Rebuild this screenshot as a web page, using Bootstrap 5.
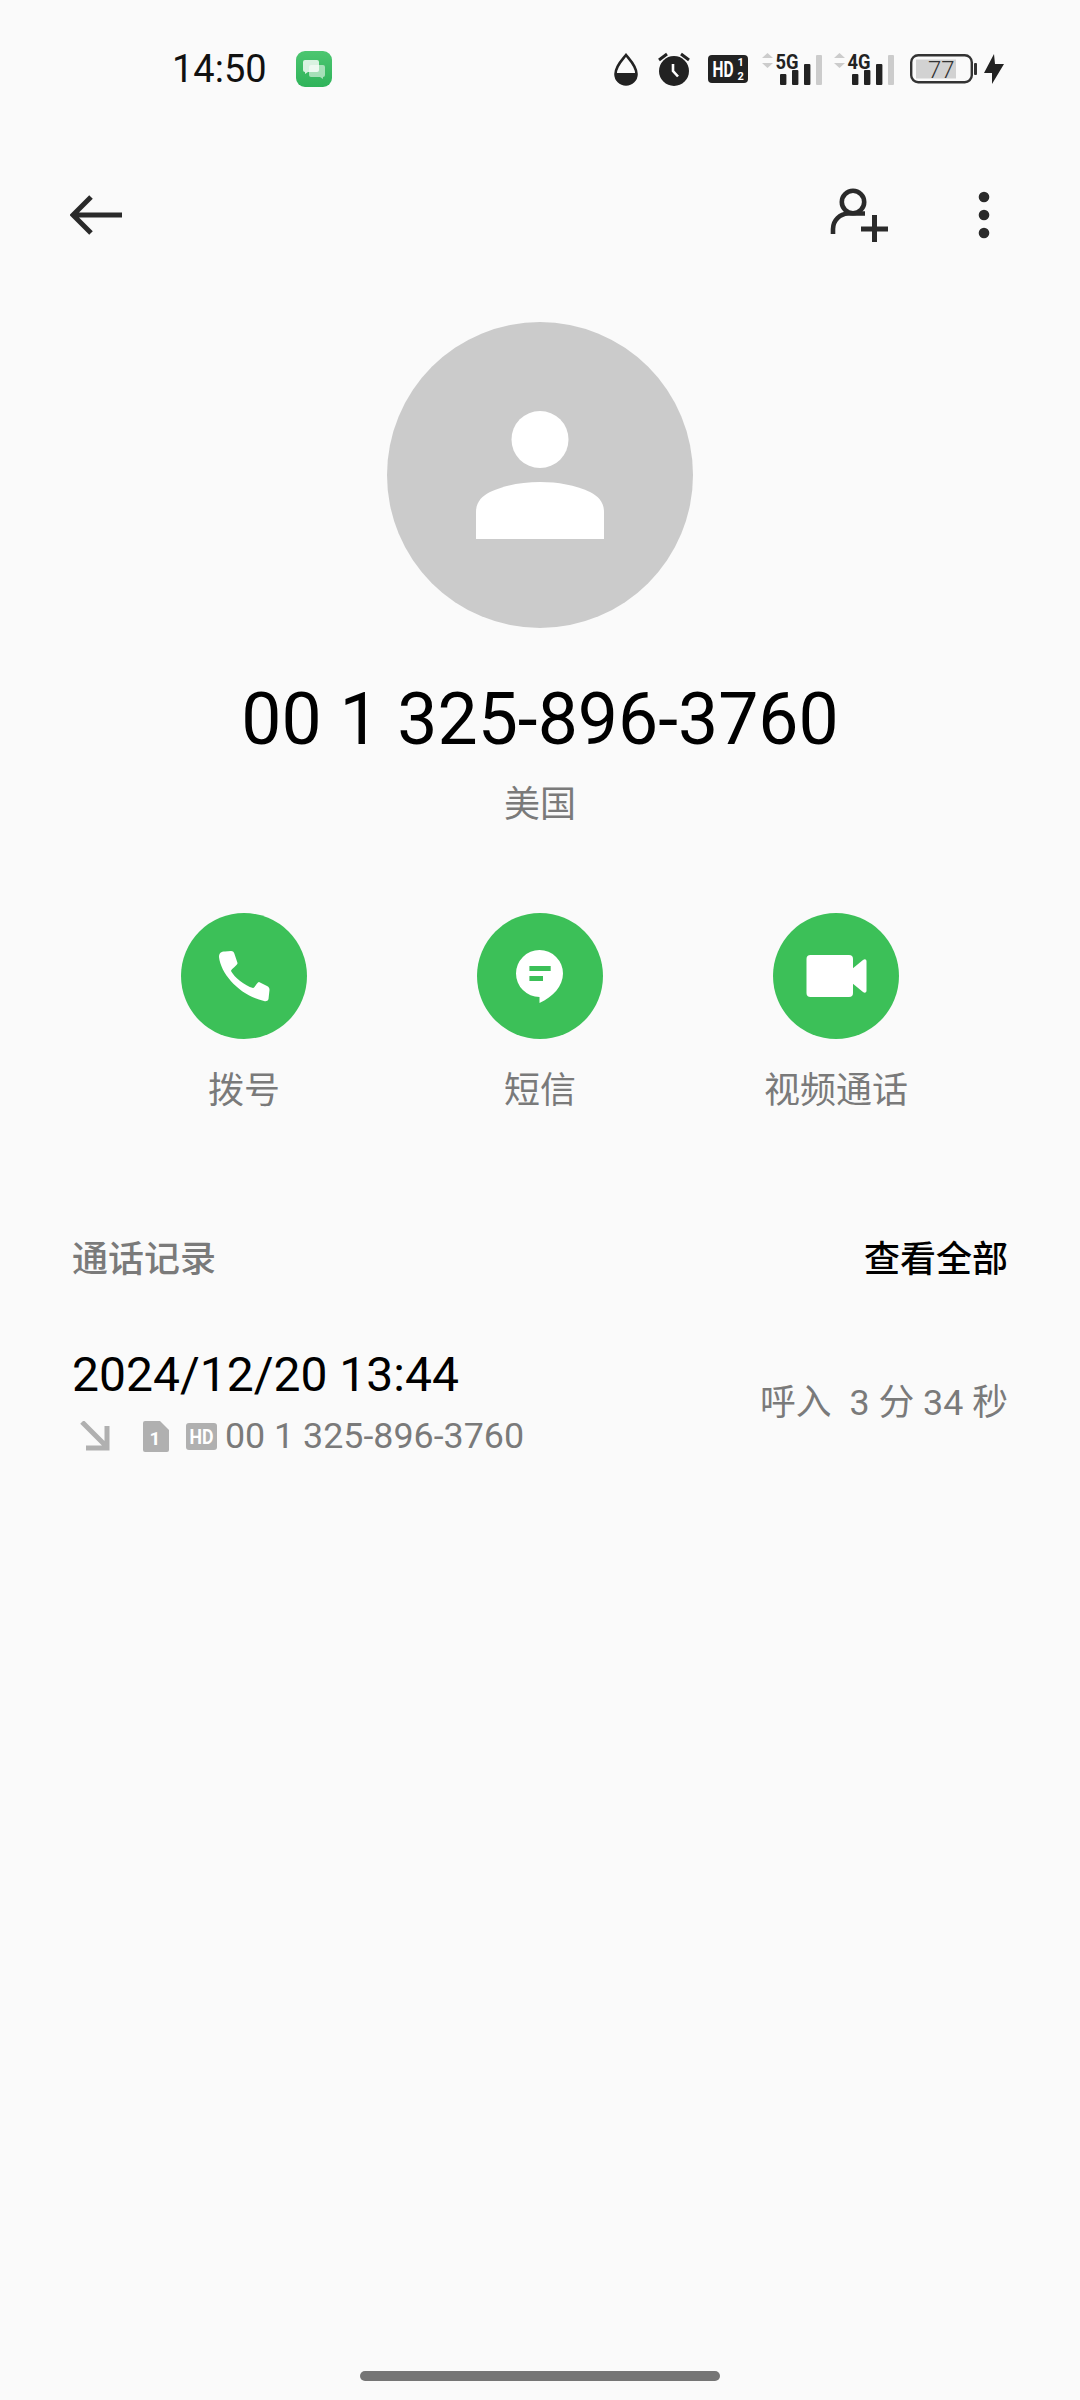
<!DOCTYPE html>
<html lang="zh-CN">
<head>
    <meta charset="UTF-8">
    <meta name="viewport" content="width=device-width, initial-scale=1.0">
    <title>通话详情</title>
    <link href="https://cdn.jsdelivr.net/npm/bootstrap@5.3.0/dist/css/bootstrap.min.css" rel="stylesheet">
    <style>
        body {
            background-color: #fafafa;
            font-family: Roboto, "Noto Sans CJK SC", sans-serif;
            color: #000;
        }
        svg { display: block; flex-shrink: 0; }
        .phone-screen { height: 2400px; }
        .status-row { height: 138px; padding: 0 76px 0 172px; }
        .status-time { font-size: 38px; line-height: 44px; color: #111; }
        .app-badge { margin-left: 29px; }
        .status-icons svg + svg { margin-left: 16px; }
        .status-icons .gap-a { margin-left: 20px; }
        .status-icons .gap-b { margin-left: 18px; }
        .status-icons .gap-c { margin-left: 14px; }
        .status-icons .gap-d { margin-left: 12px; }
        .status-icons .gap-e { margin-left: 7px; }
        .tool-row { height: 154px; padding: 0 90px 0 70px; }
        .tool-actions { gap: 90px; }
        .avatar-wrap { margin-top: 30px; }
        .caller-name { font-size: 71.5px; line-height: 84px; margin-top: 50px; }
        .caller-place { font-size: 36px; line-height: 48px; color: #7a7a7a; margin-top: 19px; }
        .action-row { padding: 0 96px; margin-top: 84px; }
        .action-label { font-size: 36px; line-height: 48px; color: #7a7a7a; margin-top: 28px; }
        .log-head { padding: 0 72px; margin-top: 121px; font-size: 36px; line-height: 48px; font-weight: 500; }
        .log-head-title { color: #7a7a7a; }
        .log-row { padding: 0 72px; margin-top: 63px; }
        .log-date { font-size: 48px; line-height: 56px; }
        .log-sub { font-size: 35.8px; line-height: 44px; color: #7a7a7a; margin-top: 11px; }
        .log-sub .sim-icon { margin-left: 33px; }
        .log-sub .hd-icon { margin-left: 17px; margin-right: 8px; }
        .log-result { font-size: 35.8px; line-height: 48px; color: #7a7a7a; }
        .home-pill { width: 360px; height: 10px; border-radius: 5px; background-color: #757575; bottom: 19px; left: 360px; }
    </style>
</head>
<body>
    <div class="phone-screen position-relative overflow-hidden">
        <!-- status bar -->
        <div class="status-row d-flex align-items-center justify-content-between">
            <div class="d-flex align-items-center">
                <span class="status-time">14:50</span>
                <svg class="app-badge" width="36" height="36" viewBox="0 0 36 36">
                    <defs>
                        <linearGradient id="badgeFill" x1="0" y1="0" x2="0" y2="1">
                            <stop offset="0" stop-color="#4cc670"/>
                            <stop offset="1" stop-color="#2fb35a"/>
                        </linearGradient>
                    </defs>
                    <rect width="36" height="36" rx="9" fill="url(#badgeFill)"/>
                    <path d="M15 14h12a2 2 0 0 1 2 2v8a2 2 0 0 1-2 2v2l-3-2h-9a2 2 0 0 1-2-2v-8a2 2 0 0 1 2-2z" fill="#fff" fill-opacity=".55"/>
                    <path d="M9 9h12a2 2 0 0 1 2 2v8a2 2 0 0 1-2 2h-9l-3 2v-2a2 2 0 0 1-2-2v-8a2 2 0 0 1 2-2z" fill="#fff" fill-opacity=".8"/>
                </svg>
            </div>
            <div class="status-icons d-flex align-items-center">
                <svg width="24" height="33" viewBox="0 0 24 33">
                    <path d="M12 2 C8 7 1.5 13 1.5 21 A10.5 10.5 0 0 0 22.5 21 C22.5 13 16 7 12 2Z" fill="none" stroke="#222" stroke-width="2.6"/>
                    <path d="M1.5 20 H22.5 V21 A10.5 10.5 0 0 1 1.5 21Z" fill="#222"/>
                </svg>
                <svg class="gap-a" width="32" height="34" viewBox="0 0 32 34">
                    <circle cx="16" cy="19" r="15" fill="#222"/>
                    <path d="M1 8 9 2M31 8 23 2" stroke="#222" stroke-width="3" fill="none"/>
                    <path d="M15 12v7l5 5.5" stroke="#fff" stroke-width="2.6" fill="none"/>
                </svg>
                <svg class="gap-b" width="40" height="28" viewBox="0 0 40 28">
                    <rect width="40" height="28" rx="4" fill="#222"/>
                    <text x="4.5" y="22" font-family="Roboto, sans-serif" font-size="22" font-weight="700" fill="#fff" textLength="21" lengthAdjust="spacingAndGlyphs">HD</text>
                    <text x="29.5" y="10.5" font-family="Roboto, sans-serif" font-size="11" font-weight="700" fill="#fff">1</text>
                    <text x="29.5" y="25" font-family="Roboto, sans-serif" font-size="11" font-weight="700" fill="#fff">2</text>
                </svg>
                <svg class="gap-c" width="60" height="40" viewBox="0 -4 60 40">
                    <path d="M0 5 5.5 0 11 5ZM0 10 5.5 15 11 10Z" fill="#ccc"/>
                    <text x="13.5" y="15.5" font-family="Roboto, sans-serif" font-size="21" font-weight="700" fill="#222" textLength="23" lengthAdjust="spacingAndGlyphs">5G</text>
                    <rect x="18" y="21" width="6.4" height="11" rx="1" fill="#222"/>
                    <rect x="30" y="17" width="6.4" height="15" rx="1" fill="#222"/>
                    <rect x="42" y="11" width="6.4" height="21" rx="1" fill="#222"/>
                    <rect x="54" y="2" width="6" height="30" rx="1" fill="#ccc"/>
                </svg>
                <svg class="gap-d" width="60" height="40" viewBox="0 -4 60 40">
                    <path d="M0 5 5.5 0 11 5ZM0 10 5.5 15 11 10Z" fill="#ccc"/>
                    <text x="13.5" y="15.5" font-family="Roboto, sans-serif" font-size="21" font-weight="700" fill="#222" textLength="23" lengthAdjust="spacingAndGlyphs">4G</text>
                    <rect x="18" y="21" width="6.4" height="11" rx="1" fill="#222"/>
                    <rect x="30" y="17" width="6.4" height="15" rx="1" fill="#222"/>
                    <rect x="42" y="11" width="6.4" height="21" rx="1" fill="#222"/>
                    <rect x="54" y="2" width="6" height="30" rx="1" fill="#ccc"/>
                </svg>
                <svg width="67" height="30" viewBox="0 0 67 30">
                    <rect x="1.2" y="1.2" width="60.6" height="27" rx="7" fill="none" stroke="#333" stroke-width="2.4"/>
                    <rect x="6" y="5.5" width="40" height="19" fill="#d2d2d2"/>
                    <text x="18" y="24" font-family="Roboto, sans-serif" font-size="24" font-weight="300" fill="#333">77</text>
                    <rect x="64" y="9" width="3" height="12" rx="1" fill="#333"/>
                </svg>
                <svg class="gap-e" width="20" height="30" viewBox="0 0 20 30">
                    <path d="M10 0 0 19H8V30L20 10H11Z" fill="#222"/>
                </svg>
            </div>
        </div>

        <!-- toolbar -->
        <div class="tool-row d-flex align-items-center justify-content-between">
            <svg width="52" height="42" viewBox="0 0 52 42">
                <path d="M52 21H4M21 3 3 21 21 39" fill="none" stroke="#2a2a2a" stroke-width="5"/>
            </svg>
            <div class="tool-actions d-flex align-items-center">
                <svg width="58" height="56" viewBox="0 0 58 56">
                    <circle cx="23" cy="15" r="11.2" fill="none" stroke="#2a2a2a" stroke-width="4.6"/>
                    <path d="M3 47V42C3 33 10 27 18 26.5H35" fill="none" stroke="#2a2a2a" stroke-width="4.6"/>
                    <path d="M31 42H58M44.5 28V55" fill="none" stroke="#2a2a2a" stroke-width="5"/>
                </svg>
                <svg width="12" height="48" viewBox="0 0 12 48">
                    <circle cx="6" cy="6" r="5.3" fill="#2a2a2a"/>
                    <circle cx="6" cy="24" r="5.3" fill="#2a2a2a"/>
                    <circle cx="6" cy="42" r="5.3" fill="#2a2a2a"/>
                </svg>
            </div>
        </div>

        <!-- contact -->
        <div class="avatar-wrap d-flex justify-content-center">
            <svg width="306" height="306" viewBox="0 0 306 306">
                <circle cx="153" cy="153" r="153" fill="#cbcbcb"/>
                <circle cx="153" cy="117.5" r="28.5" fill="#fff"/>
                <path d="M89 217V190C89 180 95 174 103 170C118 163 135 160 153 160C171 160 188 163 203 170C211 174 217 180 217 190V217Z" fill="#fff"/>
            </svg>
        </div>
        <div class="caller-name text-center">00 1 325-896-3760</div>
        <div class="caller-place text-center">美国</div>

        <!-- actions -->
        <div class="action-row row g-0">
            <div class="col-4 d-flex flex-column align-items-center">
                <svg width="126" height="126" viewBox="0 0 126 126">
                    <circle cx="63" cy="63" r="63" fill="#3cc058"/>
                    <path d="M38 44C38 40 40 38.5 44 38.5L50 38C52 38 53 39 53.5 41L56.5 50C57 52 50 56 50 58C53 64 64 73 72 75C74 75 76 69 78 69L86 73C88 74 88.5 75 88.5 77L87.5 86C87 88 85 88.5 83 88C60 83 40 62 38 44Z" fill="#fff"/>
                </svg>
                <div class="action-label">拨号</div>
            </div>
            <div class="col-4 d-flex flex-column align-items-center">
                <svg width="126" height="126" viewBox="0 0 126 126">
                    <circle cx="63" cy="63" r="63" fill="#3cc058"/>
                    <path d="M62.5 37A23.5 23.5 0 0 1 86 60.5C86 73 76 84 62.5 90V84A23.5 23.5 0 0 1 62.5 37Z" fill="#fff"/>
                    <rect x="52.4" y="53" width="21.3" height="5" fill="#3cc058"/>
                    <rect x="52.4" y="63" width="13.6" height="5" fill="#3cc058"/>
                </svg>
                <div class="action-label">短信</div>
            </div>
            <div class="col-4 d-flex flex-column align-items-center">
                <svg width="126" height="126" viewBox="0 0 126 126">
                    <circle cx="63" cy="63" r="63" fill="#3cc058"/>
                    <rect x="33.5" y="42" width="46.5" height="42" rx="4" fill="#fff"/>
                    <path d="M79 56 90 47C92 45.5 93.5 46.5 93.5 48.5V77.5C93.5 79.5 92 80.5 90 79L79 70Z" fill="#fff"/>
                </svg>
                <div class="action-label">视频通话</div>
            </div>
        </div>

        <!-- call log -->
        <div class="log-head d-flex justify-content-between">
            <span class="log-head-title">通话记录</span>
            <span>查看全部</span>
        </div>
        <div class="log-row d-flex align-items-center justify-content-between">
            <div>
                <div class="log-date">2024/12/20 13:44</div>
                <div class="log-sub d-flex align-items-center">
                    <svg class="ms-2" width="30" height="30" viewBox="0 0 30 30">
                        <path d="M2 1 25 24M27 5V27H6" fill="none" stroke="#b0b0b0" stroke-width="5"/>
                    </svg>
                    <svg class="sim-icon" width="26" height="31" viewBox="0 0 26 31">
                        <path d="M2 0H17L26 9V29A2 2 0 0 1 24 31H2A2 2 0 0 1 0 29V2A2 2 0 0 1 2 0Z" fill="#b0b0b0"/>
                        <text x="12" y="23.5" text-anchor="middle" font-family="Roboto, sans-serif" font-size="19" font-weight="700" fill="#fff">1</text>
                    </svg>
                    <svg class="hd-icon" width="31" height="27" viewBox="0 0 31 27">
                        <rect width="31" height="27" rx="3" fill="#b0b0b0"/>
                        <text x="3.5" y="20.5" font-family="Roboto, sans-serif" font-size="21" font-weight="700" fill="#fff" textLength="24" lengthAdjust="spacingAndGlyphs">HD</text>
                    </svg>
                    <span>00 1 325-896-3760</span>
                </div>
            </div>
            <div class="log-result">呼入&nbsp; 3 分 34 秒</div>
        </div>

        <div class="home-pill position-absolute"></div>
    </div>

    <script src="https://cdn.jsdelivr.net/npm/bootstrap@5.3.0/dist/js/bootstrap.bundle.min.js"></script>
</body>
</html>
